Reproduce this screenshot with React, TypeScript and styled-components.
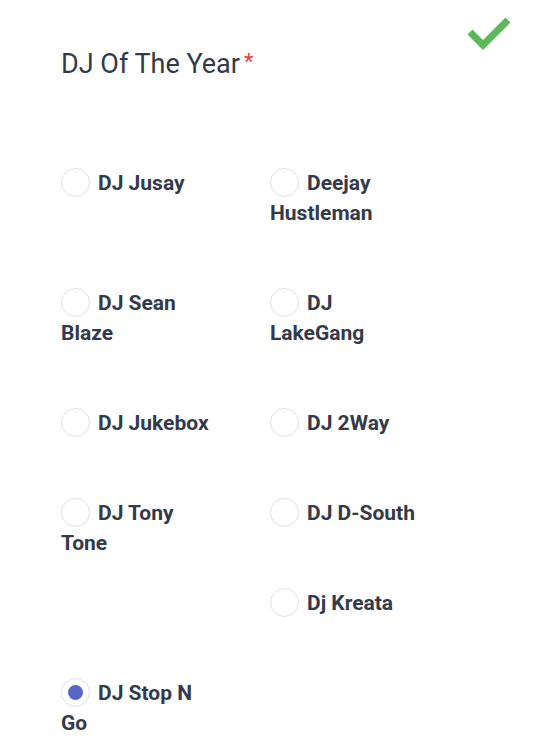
import React from 'react'
import styled, { createGlobalStyle } from 'styled-components'

const GlobalStyle = createGlobalStyle`
  html, body {
    margin: 0;
    padding: 0;
    background: #ffffff;
  }
  body {
    font-family: Roboto, "Liberation Sans", Arial, sans-serif;
    color: #333a4b;
  }
`

const Page = styled.div`
  width: 540px;
  min-height: 744px;
  overflow: hidden;
`

const Header = styled.div`
  display: flex;
  justify-content: space-between;
  align-items: flex-start;
  padding: 17px 28px 0 61px;
`

const Title = styled.h2`
  margin: 28px 0 0;
  font-size: 27px;
  line-height: 34px;
  font-weight: 400;
  color: #333a4b;
`

const Required = styled.span`
  margin-left: 4px;
  color: #e8413c;
  font-size: 22px;
  vertical-align: 4px;
`

const Check = styled.svg`
  width: 46px;
  height: 34px;
  flex-shrink: 0;
`

const Options = styled.ul`
  list-style: none;
  margin: 87px 0 0;
  padding: 0 61px;

  &::after {
    content: '';
    display: block;
    clear: both;
  }
`

const Option = styled.li<{ $clear?: boolean }>`
  float: left;
  width: 155px;
  margin: 0 54px 60px 0;
  font-size: 21px;
  line-height: 30px;
  font-weight: 700;
  color: #333a4b;
  cursor: pointer;
  clear: ${(p) => (p.$clear ? 'both' : 'none')};
`

const Radio = styled.span<{ $checked?: boolean }>`
  display: inline-block;
  position: relative;
  width: 29px;
  height: 29px;
  margin: 0 8px 0 0;
  border: 1.5px solid #dfe1e7;
  border-radius: 50%;
  box-sizing: border-box;
  vertical-align: top;

  &::after {
    content: '';
    display: ${(p) => (p.$checked ? 'block' : 'none')};
    position: absolute;
    top: 5.5px;
    left: 5.5px;
    width: 15px;
    height: 15px;
    border-radius: 50%;
    background: #5a66c5;
  }
`

const djs = [
  'DJ Jusay',
  'Deejay Hustleman',
  'DJ Sean Blaze',
  'DJ LakeGang',
  'DJ Jukebox',
  'DJ 2Way',
  'DJ Tony Tone',
  'DJ D-South',
  'Dj Kreata',
  'DJ Stop N Go',
]

export default function App() {
  const selected = 'DJ Stop N Go'

  return (
    <Page>
      <GlobalStyle />
      <Header>
        <Title>
          DJ Of The Year<Required>*</Required>
        </Title>
        <Check viewBox="0 0 46 34">
          <path
            d="M4 15 L17 28 L42 3"
            fill="none"
            stroke="#5cb85a"
            strokeWidth="7"
          />
        </Check>
      </Header>
      <Options>
        {djs.map((name) => (
          <Option key={name} $clear={name === 'DJ Stop N Go'}>
            <Radio $checked={name === selected} />
            {name}
          </Option>
        ))}
      </Options>
    </Page>
  )
}
